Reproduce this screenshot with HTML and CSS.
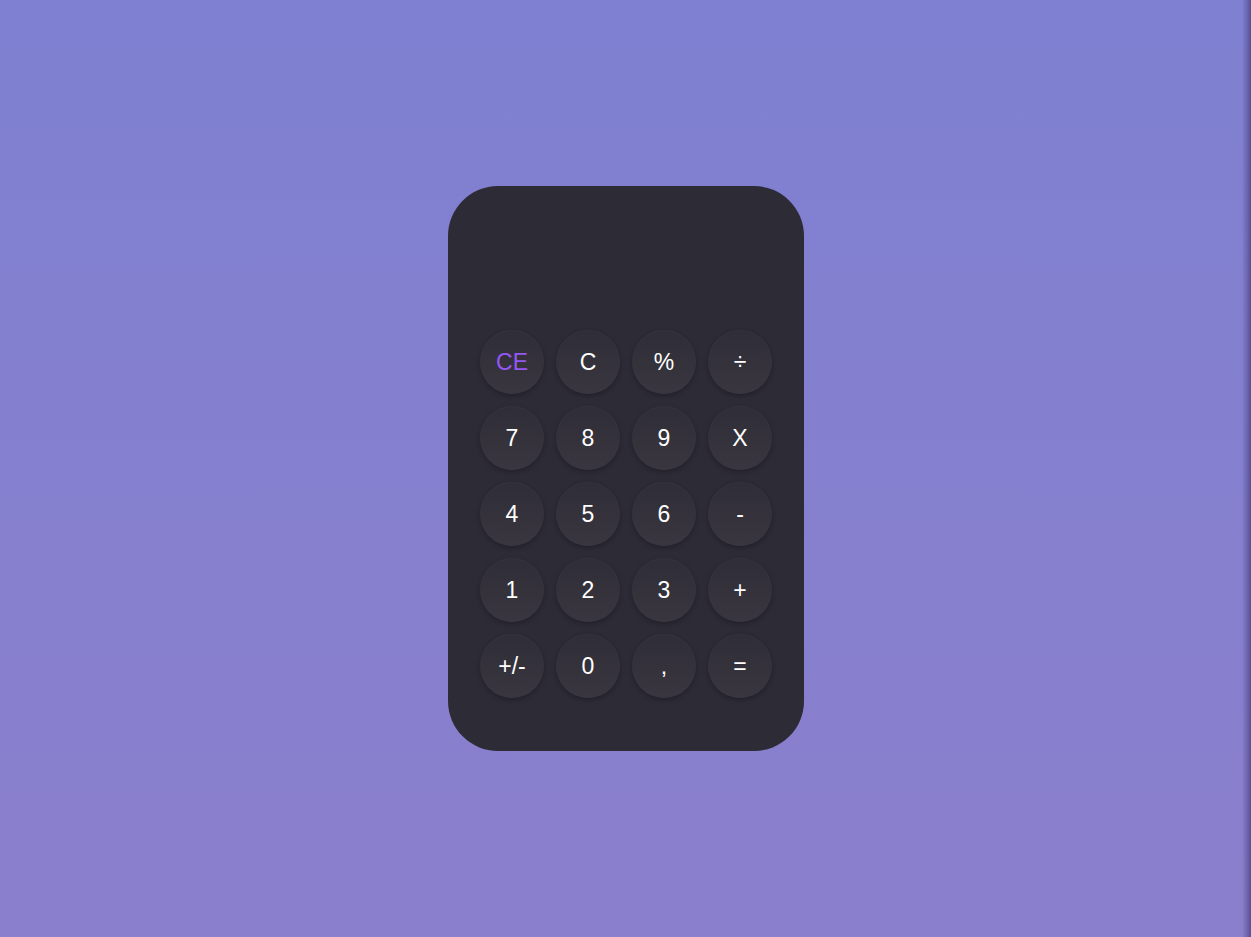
FILE: index.html
```html
<!DOCTYPE html>
<html lang="en">
<head>
<meta charset="utf-8">
<title>Calculator</title>
<link rel="stylesheet" href="styles.css">
</head>
<body>
<div class="page">
  <div class="calculator">
    <div class="display"></div>
    <div class="keys">
      <button class="key key-accent">CE</button>
      <button class="key">C</button>
      <button class="key">%</button>
      <button class="key">÷</button>
      <button class="key">7</button>
      <button class="key">8</button>
      <button class="key">9</button>
      <button class="key">X</button>
      <button class="key">4</button>
      <button class="key">5</button>
      <button class="key">6</button>
      <button class="key">-</button>
      <button class="key">1</button>
      <button class="key">2</button>
      <button class="key">3</button>
      <button class="key">+</button>
      <button class="key">+/-</button>
      <button class="key">0</button>
      <button class="key">,</button>
      <button class="key">=</button>
    </div>
  </div>
</div>
<div class="edge"></div>
</body>
</html>
```
FILE: styles.css
```css
html, body {
  margin: 0;
  padding: 0;
  height: 100%;
}
body {
  background: linear-gradient(to bottom, #7f80d1 0%, #8a7fcc 100%);
  font-family: "Liberation Sans", Arial, sans-serif;
  overflow: hidden;
}
.page {
  height: 100%;
  display: flex;
  justify-content: center;
  padding-top: 186px;
  box-sizing: border-box;
}
.calculator {
  width: 356px;
  height: 565px;
  box-sizing: border-box;
  background: #2d2b36;
  border-radius: 50px;
  padding: 32px;
  margin-left: 1px;
}
.display {
  height: 112px;
}
.keys {
  display: grid;
  grid-template-columns: repeat(4, 64px);
  grid-auto-rows: 64px;
  gap: 12px;
}
.key {
  width: 64px;
  height: 64px;
  border-radius: 50%;
  border: none;
  padding: 0;
  background: linear-gradient(to bottom, #2f2d37 0%, #39363f 100%);
  box-shadow: 0 2px 5px rgba(0, 0, 0, 0.28), inset 0 1px 1px rgba(255, 255, 255, 0.03);
  color: #ffffff;
  font-family: "Liberation Sans", Arial, sans-serif;
  font-size: 23px;
  line-height: 64px;
  text-align: center;
}
.key-accent {
  color: #9457f4;
}
.edge {
  position: fixed;
  top: 0;
  right: 0;
  width: 9px;
  height: 100%;
  background: linear-gradient(to right, rgba(60, 50, 110, 0) 0%, rgba(60, 50, 110, 0.35) 60%, rgba(50, 40, 100, 0.55) 100%);
}
```
